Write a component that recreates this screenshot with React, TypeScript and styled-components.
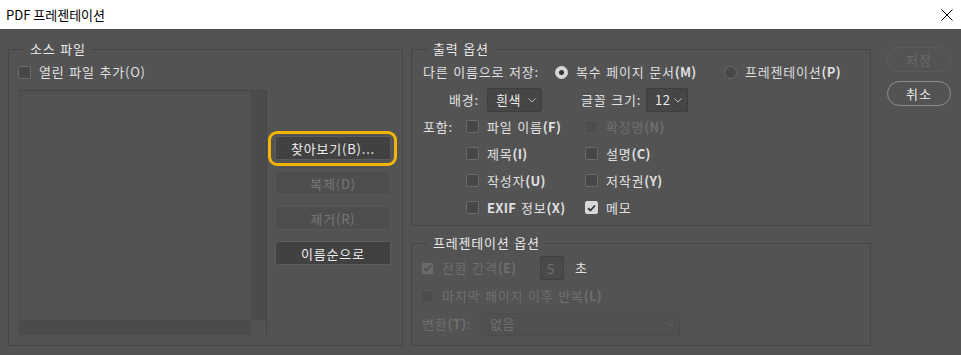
import React from 'react';
import styled, { createGlobalStyle, css } from 'styled-components';

const Global = createGlobalStyle`
  html, body { margin: 0; padding: 0; background: #535353; }
  body {
    width: 961px; height: 355px; overflow: hidden;
    font-family: "Noto Sans CJK KR", "Noto Sans", sans-serif;
    font-size: 13px; color: #dedede;
  }
  * { box-sizing: border-box; }
`;

const Window = styled.div`
  width: 961px; height: 355px;
  display: flex; flex-direction: column;
`;

const TitleBar = styled.div`
  height: 29px; flex: none;
  background: #ffffff; color: #000;
  display: flex; align-items: center; justify-content: space-between;
  padding: 0 8px 0 6px;
  font-size: 13px; line-height: 1;
`;

const Body = styled.div`
  flex: 1;
  background: #535353;
  display: flex;
  padding: 12px 10px 9px 8px;
  letter-spacing: 0.8px;
  word-spacing: 1px;
`;

const Group = styled.fieldset<{ $w: number; $h: number }>`
  margin: 0; padding: 0; min-width: 0;
  width: ${p => p.$w}px; height: ${p => p.$h}px;
  border: 1px solid #454545;
  flex: none;
`;

const Legend = styled.legend`
  margin-left: 15px; padding: 0 5px 0 6px;
  font-size: 13px; line-height: 16px; color: #e8e8e8;
`;

const LeftContent = styled.div`
  display: grid;
  grid-template-columns: 248px 116px;
  grid-template-rows: 14px auto;
  column-gap: 9px;
  padding: 8px 0 0 9px;
`;

const Row = styled.div<{ $h?: number; $pl?: number }>`
  display: flex; align-items: center;
  height: ${p => p.$h ?? 20}px;
  padding-left: ${p => p.$pl ?? 0}px;
  white-space: nowrap;
`;

const TopRow = styled(Row)`
  grid-column: 1 / span 2; grid-row: 1;
`;

const CheckItem = styled.label<{ $w?: number; $disabled?: boolean }>`
  display: flex; align-items: center; gap: 8px;
  ${p => p.$w && css`width: ${p.$w}px;`}
  color: ${p => (p.$disabled ? '#6f6f6f' : '#e0e0e0')};
  line-height: 16px; white-space: nowrap;
`;

const Box = styled.span<{ $checked?: boolean; $disabled?: boolean }>`
  width: 13px; height: 13px; flex: none;
  border-radius: 2px;
  display: inline-flex; align-items: center; justify-content: center;
  border: 1px solid ${p => (p.$disabled ? '#575757' : p.$checked ? '#d8d8d8' : '#6b6b6b')};
  background: ${p =>
    p.$checked ? (p.$disabled ? '#6a6a6a' : '#d8d8d8') : p.$disabled ? '#4d4d4d' : '#474747'};
`;

const Radio = styled.span<{ $checked?: boolean }>`
  width: 13px; height: 13px; flex: none; border-radius: 50%;
  display: inline-flex; align-items: center; justify-content: center;
  border: 1px solid ${p => (p.$checked ? '#d6d6d6' : '#6b6b6b')};
  background: ${p => (p.$checked ? '#d6d6d6' : '#484848')};
  &::after {
    content: '';
    display: ${p => (p.$checked ? 'block' : 'none')};
    width: 5px; height: 5px; border-radius: 50%;
    background: #333;
  }
`;

const Key = styled.span<{ $bold?: boolean }>`
  font-weight: ${p => (p.$bold ? 600 : 400)};
  letter-spacing: 0.3px;
`;

const FileList = styled.div`
  grid-column: 1; grid-row: 2;
  margin-top: 11px; margin-left: 1px;
  width: 248px; height: 245px;
  display: grid;
  grid-template-columns: 1fr 15px;
  grid-template-rows: 1fr 15px;
  border-top: 1px solid #454545;
  border-left: 1px solid #4a4a4a;
  border-right: 1px solid #444;
`;
const ListArea = styled.div` background: #525252; `;
const Scroll = styled.div<{ $tone: string }>` background: ${p => p.$tone}; `;

const ButtonCol = styled.div`
  grid-column: 2; grid-row: 2;
  padding-top: 57px;
  display: flex; flex-direction: column; gap: 11px;
`;

const FocusRing = styled.div`
  border: 3px solid #f3b505;
  border-radius: 9px;
  padding: 2px 3px 3px 4px;
  margin: -5px -6px -6px -7px;
`;

const Btn = styled.button<{ $disabled?: boolean }>`
  width: 116px; height: 24px; padding: 0;
  font-family: inherit; font-size: 13px; line-height: 1;
  border-radius: 2px;
  border: 1px solid ${p => (p.$disabled ? '#575757' : '#5c5c5c')};
  background: ${p => (p.$disabled ? '#4e4e4e' : '#414141')};
  color: ${p => (p.$disabled ? '#777' : '#ececec')};
  letter-spacing: 0.8px;
`;

const RightCol = styled.div`
  margin-left: 8px;
  display: flex; flex-direction: column; gap: 9px;
`;

const OutputContent = styled.div`
  padding: 5px 0 0 11px;
  display: flex; flex-direction: column;
`;

const Label = styled.span<{ $w?: number; $right?: boolean; $disabled?: boolean }>`
  display: inline-block;
  ${p => p.$w && css`width: ${p.$w}px;`}
  text-align: ${p => (p.$right ? 'right' : 'left')};
  color: ${p => (p.$disabled ? '#6e6e6e' : '#e0e0e0')};
  line-height: 16px; white-space: nowrap; flex: none;
`;

const RadioItem = styled.label<{ $w?: number }>`
  display: flex; align-items: center; gap: 8px;
  ${p => p.$w && css`width: ${p.$w}px;`}
  line-height: 16px;
`;

const Select = styled.div<{ $w: number; $h?: number; $disabled?: boolean }>`
  width: ${p => p.$w}px; height: ${p => p.$h ?? 24}px; flex: none;
  display: flex; align-items: center; justify-content: space-between;
  padding: 0 5px 0 8px;
  border: 1px solid ${p => (p.$disabled ? '#4b4b4b' : '#3e3e3e')};
  border-radius: 2px;
  background: ${p => (p.$disabled ? '#505050' : '#464646')};
  color: ${p => (p.$disabled ? '#707070' : '#ececec')};
  line-height: 16px;
  letter-spacing: 0.5px;
`;

const IncludeGrid = styled.div`
  margin-top: 1px;
  display: grid;
  grid-template-columns: 43px 119px auto;
  grid-auto-rows: 27px;
  align-items: center;
`;

const PresContent = styled.div`
  padding: 5px 0 0 9px;
  display: flex; flex-direction: column; gap: 4px;
`;

const NumberBox = styled.div`
  width: 24px; height: 24px; flex: none;
  display: flex; align-items: center; padding-left: 6px;
  border: 1px solid #3f3f3f;
  background: #4a4a4a; color: #6e6e6e;
`;

const ActionCol = styled.div`
  margin-left: 16px; padding-top: 6px;
  display: flex; flex-direction: column; gap: 9px;
`;

const PillBtn = styled.button<{ $disabled?: boolean }>`
  width: 64px; height: 25px; padding: 0;
  font-family: inherit; font-size: 13px; line-height: 1;
  letter-spacing: 1px;
  border-radius: 13px;
  background: transparent;
  border: 1px solid ${p => (p.$disabled ? '#5b5b5b' : '#8c8c8c')};
  color: ${p => (p.$disabled ? '#6b6b6b' : '#e8e8e8')};
`;

const Check = ({ color }: { color: string }) => (
  <svg width="9" height="8" viewBox="0 0 9 8">
    <path d="M1 4.2 L3.4 6.5 L8 1.5" fill="none" stroke={color} strokeWidth="1.8" />
  </svg>
);

const Chevron = ({ color }: { color: string }) => (
  <svg width="8" height="5" viewBox="0 0 8 5">
    <path d="M0.5 0.5 L4 4 L7.5 0.5" fill="none" stroke={color} strokeWidth="1" />
  </svg>
);

const CheckBox = ({ checked, disabled }: { checked?: boolean; disabled?: boolean }) => (
  <Box $checked={checked} $disabled={disabled}>
    {checked && <Check color={disabled ? '#4e4e4e' : '#333'} />}
  </Box>
);

export default function App() {
  return (
    <Window>
      <Global />
      <TitleBar>
        <span>PDF 프레젠테이션</span>
        <svg width="12" height="12" viewBox="0 0 12 12">
          <path d="M0.5 0.5 L11.5 11.5 M11.5 0.5 L0.5 11.5" stroke="#000" strokeWidth="1" />
        </svg>
      </TitleBar>
      <Body>
        <Group $w={395} $h={305}>
          <Legend>소스 파일</Legend>
          <LeftContent>
            <TopRow $h={14}>
              <CheckItem>
                <CheckBox />
                <span>열린 파일 추가(O)</span>
              </CheckItem>
            </TopRow>
            <FileList>
              <ListArea />
              <Scroll $tone="#4b4b4b" />
              <Scroll $tone="#4b4b4b" />
              <Scroll $tone="#525252" />
            </FileList>
            <ButtonCol>
              <FocusRing>
                <Btn>찾아보기(B)...</Btn>
              </FocusRing>
              <Btn $disabled>복제(D)</Btn>
              <Btn $disabled>제거(R)</Btn>
              <Btn>이름순으로</Btn>
            </ButtonCol>
          </LeftContent>
        </Group>

        <RightCol>
          <Group $w={460} $h={185}>
            <Legend>출력 옵션</Legend>
            <OutputContent>
              <Row $h={20}>
                <Label $w={132}>다른 이름으로 저장:</Label>
                <RadioItem $w={169}>
                  <Radio $checked />
                  <span>복수 페이지 문서<Key $bold>(M)</Key></span>
                </RadioItem>
                <RadioItem>
                  <Radio />
                  <span>프레젠테이션<Key $bold>(P)</Key></span>
                </RadioItem>
              </Row>
              <Row $h={24} style={{ marginTop: 6 }}>
                <Label $w={56} $right>배경:</Label>
                <Select $w={55} style={{ marginLeft: 8 }}>
                  <span>흰색</span>
                  <Chevron color="#bdbdbd" />
                </Select>
                <Label $w={58} style={{ marginLeft: 39 }}>글꼴 크기:</Label>
                <Select $w={42} style={{ marginLeft: 7 }}>
                  <span>12</span>
                  <Chevron color="#bdbdbd" />
                </Select>
              </Row>
              <IncludeGrid>
                <Label>포함:</Label>
                <CheckItem>
                  <CheckBox />
                  <span>파일 이름<Key $bold>(F)</Key></span>
                </CheckItem>
                <CheckItem $disabled>
                  <CheckBox disabled />
                  <span>확장명<Key $bold>(N)</Key></span>
                </CheckItem>
                <span />
                <CheckItem>
                  <CheckBox />
                  <span>제목<Key $bold>(I)</Key></span>
                </CheckItem>
                <CheckItem>
                  <CheckBox />
                  <span>설명<Key $bold>(C)</Key></span>
                </CheckItem>
                <span />
                <CheckItem>
                  <CheckBox />
                  <span>작성자<Key $bold>(U)</Key></span>
                </CheckItem>
                <CheckItem>
                  <CheckBox />
                  <span>저작권<Key $bold>(Y)</Key></span>
                </CheckItem>
                <span />
                <CheckItem>
                  <CheckBox />
                  <span><Key $bold>EXIF</Key> 정보<Key $bold>(X)</Key></span>
                </CheckItem>
                <CheckItem>
                  <CheckBox checked />
                  <span>메모</span>
                </CheckItem>
              </IncludeGrid>
            </OutputContent>
          </Group>

          <Group $w={460} $h={111}>
            <Legend>프레젠테이션 옵션</Legend>
            <PresContent>
              <Row $h={24}>
                <CheckItem $w={119} $disabled>
                  <CheckBox checked disabled />
                  <span>전환 간격<Key $bold>(E)</Key></span>
                </CheckItem>
                <NumberBox>5</NumberBox>
                <Label style={{ marginLeft: 11 }}>초</Label>
              </Row>
              <Row $h={24}>
                <CheckItem $disabled>
                  <CheckBox disabled />
                  <span>마지막 페이지 이후 반복<Key $bold>(L)</Key></span>
                </CheckItem>
              </Row>
              <Row $h={24} $pl={1}>
                <Label $w={59} $disabled>변환<Key $bold>(T)</Key>:</Label>
                <Select $w={199} $h={23} $disabled>
                  <span>없음</span>
                  <Chevron color="#5f5f5f" />
                </Select>
              </Row>
            </PresContent>
          </Group>
        </RightCol>

        <ActionCol>
          <PillBtn $disabled>저장</PillBtn>
          <PillBtn>취소</PillBtn>
        </ActionCol>
      </Body>
    </Window>
  );
}
